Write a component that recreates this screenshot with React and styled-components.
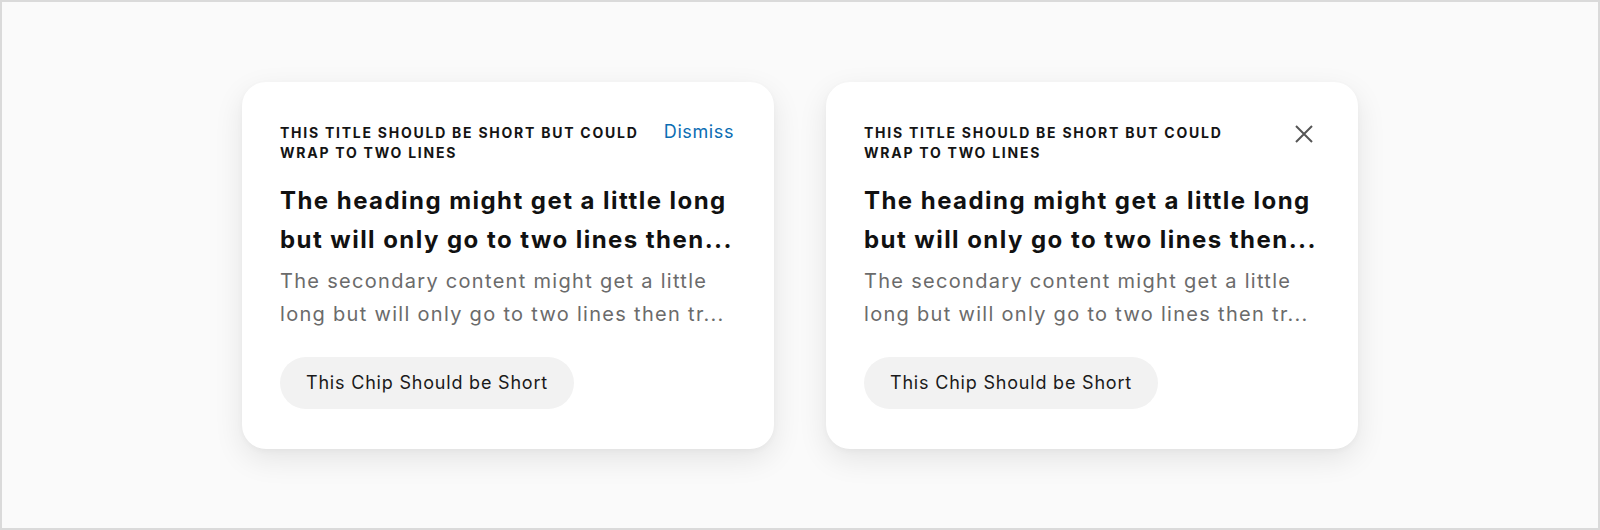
import React from 'react';
import styled, { createGlobalStyle } from 'styled-components';

const GlobalStyle = createGlobalStyle`
  html, body {
    margin: 0;
    padding: 0;
  }
  body {
    font-family: Inter, "Noto Sans", "Liberation Sans", sans-serif;
    -webkit-font-smoothing: antialiased;
  }
  * {
    box-sizing: border-box;
  }
`;

const Page = styled.main`
  width: 1600px;
  height: 530px;
  background-color: #fafafa;
  border: 2px solid #dadada;
  display: flex;
  justify-content: center;
  align-items: center;
  gap: 52px;
`;

const Card = styled.section`
  width: 532px;
  padding: 41px 40px 40px 38px;
  background-color: #ffffff;
  border-radius: 24px;
  box-shadow: 0 10px 30px rgba(0, 0, 0, 0.09), 0 2px 6px rgba(0, 0, 0, 0.03);
  display: flex;
  flex-direction: column;
  align-items: flex-start;
`;

const Header = styled.div`
  width: 100%;
  display: flex;
  justify-content: space-between;
  align-items: flex-start;
  gap: 20px;
`;

const Eyebrow = styled.h3`
  margin: 0;
  max-width: 372px;
  font-size: 14px;
  line-height: 20px;
  font-weight: 700;
  letter-spacing: 1.75px;
  text-transform: uppercase;
  color: #141414;
`;

const DismissLink = styled.button`
  border: none;
  background: transparent;
  padding: 0;
  margin-top: -1px;
  font-family: inherit;
  font-size: 18px;
  line-height: 20px;
  letter-spacing: 0.6px;
  color: #0b6db3;
  cursor: pointer;
`;

const CloseButton = styled.button`
  border: none;
  background: transparent;
  padding: 0;
  margin: 1px 4px 0 0;
  width: 20px;
  height: 20px;
  display: flex;
  align-items: center;
  justify-content: center;
  color: #555555;
  cursor: pointer;
`;

const Heading = styled.h2`
  margin: 18px -14px 0 0;
  font-size: 24px;
  line-height: 39px;
  font-weight: 700;
  color: #111111;
  letter-spacing: 1.45px;
`;

const Secondary = styled.p`
  margin: 6px 0 0;
  font-size: 20px;
  line-height: 33px;
  font-weight: 400;
  letter-spacing: 1.3px;
  color: #6b6b6b;
`;

const Chip = styled.span`
  margin-top: 26px;
  height: 52px;
  padding: 0 26px;
  display: inline-flex;
  align-items: center;
  border-radius: 26px;
  background-color: #f2f2f2;
  font-size: 18px;
  letter-spacing: 0.8px;
  color: #1a1a1a;
`;

const CloseIcon = () => (
  <svg width="20" height="20" viewBox="0 0 20 20" fill="none">
    <path d="M2 2 18 18 M18 2 2 18" stroke="currentColor" strokeWidth="2" />
  </svg>
);

const PromoCard = ({ action }) => (
  <Card>
    <Header>
      <Eyebrow>This title should be short but could wrap to two lines</Eyebrow>
      {action === 'dismiss' ?
        <DismissLink>Dismiss</DismissLink> :
        <CloseButton aria-label="Close"><CloseIcon /></CloseButton>
      }
    </Header>
    <Heading>The heading might get a little long but will only go to two lines then...</Heading>
    <Secondary>The secondary content might get a little long but will only go to two lines then tr...</Secondary>
    <Chip>This Chip Should be Short</Chip>
  </Card>
);

export default function App() {
  return (
    <>
      <GlobalStyle />
      <Page>
        <PromoCard action="dismiss" />
        <PromoCard action="close" />
      </Page>
    </>
  );
}
